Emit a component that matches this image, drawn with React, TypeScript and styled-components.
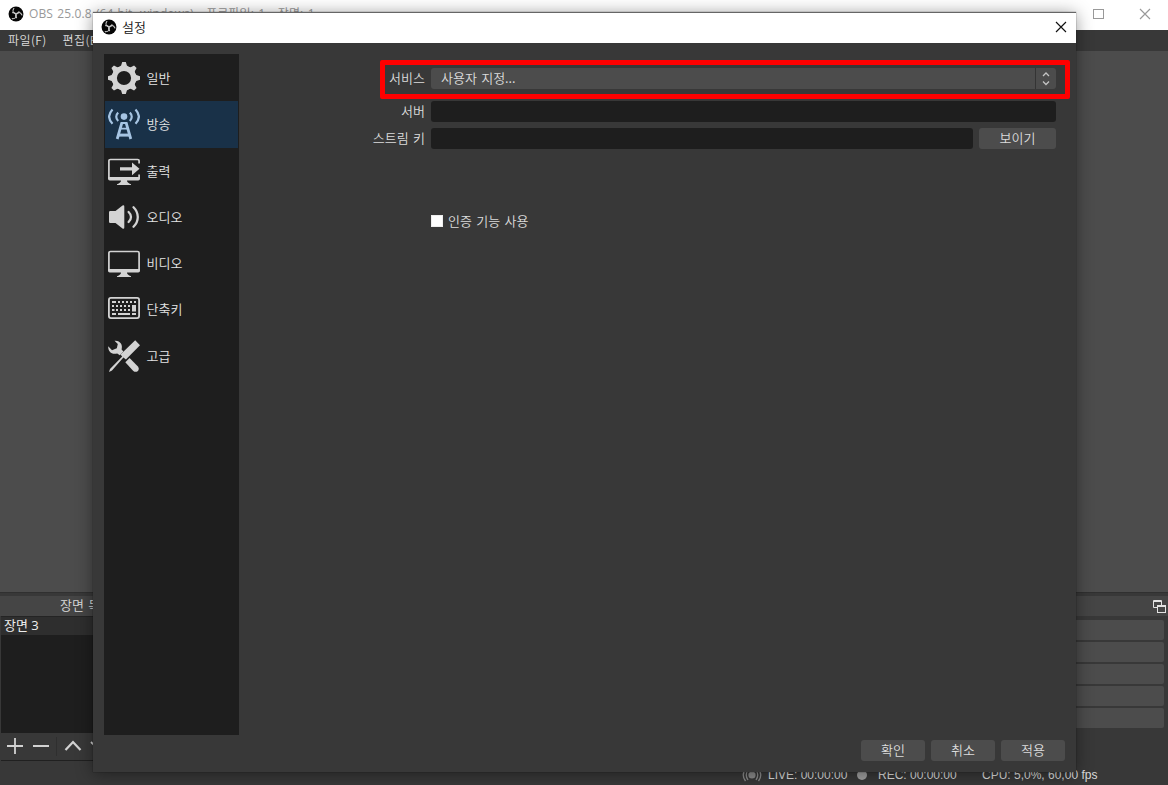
import React from "react";
import styled, { createGlobalStyle } from "styled-components";

const Global = createGlobalStyle`
  * { box-sizing: border-box; }
  html, body { margin: 0; overflow: hidden; background: #383838; }
  body {
    font-family: "Noto Sans CJK KR", "Open Sans", sans-serif;
    font-size: 13px;
    line-height: 16px;
    color: #dcdcdc;
    font-weight: 350;
    white-space: pre;
  }
`;

const Desktop = styled.div`
  position: relative;
  width: 1168px;
  height: 785px;
  overflow: hidden;
`;

/* ---------- main window ---------- */

const MainWindow = styled.div`
  display: flex;
  flex-direction: column;
  height: 100%;
  background: #383838;
`;

const MainTitle = styled.div`
  flex: none;
  display: flex;
  align-items: center;
  height: 30px;
  padding: 0 17px 2px 8px;
  background: #fff;
  color: #999;
  font-family: "Open Sans", "Noto Sans CJK KR", sans-serif;
  font-size: 12px;
  font-weight: 400;
`;

const TitleText = styled.span<{ $main?: boolean }>`
  flex: 1;
  margin-left: 5px;
  letter-spacing: ${(p) => (p.$main ? 0.1 : 0)}px;
  word-spacing: ${(p) => (p.$main ? 1.1 : 0)}px;
`;

const WindowButtons = styled.div`
  display: flex;
  gap: 35px;
`;

const MenuBar = styled.div`
  flex: none;
  display: flex;
  gap: 16px;
  height: 21px;
  padding: 2px 8px;
  font-size: 12px;
  letter-spacing: 0.4px;
`;

const Preview = styled.div`
  flex: none;
  height: 541px;
  background: #4c4c4c;
`;

const Docks = styled.div`
  flex: none;
  display: flex;
  justify-content: space-between;
  height: 169px;
  padding-top: 3px;
  border-top: 1px solid #303030;
`;

const Dock = styled.div<{ $width: number }>`
  display: flex;
  flex-direction: column;
  width: ${(p) => p.$width}px;
`;

const DockTitle = styled.div<{ $end?: boolean }>`
  flex: none;
  display: flex;
  align-items: center;
  justify-content: ${(p) => (p.$end ? "flex-end" : "flex-start")};
  height: 20px;
  padding: ${(p) => (p.$end ? "2px 2px 0 0" : "0 0 2px 60px")};
  background: #454545;
  word-spacing: 1.5px;
`;

const SceneList = styled.div`
  flex: 1;
  margin-left: 1px;
  border-top: 1px solid #242424;
  background: #1e1e1e;
`;

const SceneRow = styled.div`
  height: 18px;
  padding: 0 3px;
  background: #2e2e2e;
  color: #eee;
  font-family: "Open Sans", "Noto Sans CJK KR", sans-serif;
  font-size: 13px;
  font-weight: 400;
`;

const DockToolbar = styled.div`
  flex: none;
  height: 28px;
  margin-left: 1px;
  border-bottom: 1px solid #202020;
`;

const ControlStack = styled.div`
  display: flex;
  flex-direction: column;
  gap: 2px;
  padding: 4.4px 4px 0 0;
`;

const ControlButton = styled.div`
  height: 20px;
  border-radius: 2px;
  background: #4c4c4c;
`;

const StatusBar = styled.div`
  flex: 1;
  display: flex;
  align-items: center;
  padding: 3px 71px 0 0;
  justify-content: flex-end;
  font-family: "Liberation Sans", sans-serif;
  font-size: 12px;
`;

const StatusText = styled.span<{ $width: number; $gap: number }>`
  width: ${(p) => p.$width}px;
  margin-left: ${(p) => p.$gap}px;
`;

/* ---------- settings dialog ---------- */

const Dialog = styled.div`
  position: absolute;
  left: 93px;
  top: 12px;
  width: 983px;
  height: 760px;
  display: flex;
  flex-direction: column;
  border-top: 1px solid #666;
  background: #383838;
  box-shadow: 0 2px 16px rgba(0, 0, 0, 0.42), 0 0 1px rgba(0, 0, 0, 0.6);
`;

const DialogTitle = styled.div`
  flex: none;
  display: flex;
  align-items: center;
  height: 30px;
  padding: 0 9px 2px 8px;
  background: #fff;
  color: #111;
  font-size: 13px;
`;

const DialogBody = styled.div`
  flex: 1;
  display: flex;
  padding: 11px 11px 6px;
`;

const Sidebar = styled.nav`
  flex: none;
  width: 135px;
  height: 681px;
  padding: 1px;
  background: #1e1e1e;
`;

const SideItem = styled.div<{ $active?: boolean }>`
  display: flex;
  align-items: center;
  gap: 6.5px;
  height: 46.25px;
  padding-left: 3px;
  background: ${(p) => (p.$active ? "#193148" : "transparent")};
  color: #e4e4e4;
  svg { flex: none; color: ${(p) => (p.$active ? "#a6c4e2" : "#d3d3d3")}; }
`;

const Content = styled.div`
  flex: 1;
  display: flex;
  flex-direction: column;
  padding-left: 9px;
  word-spacing: 1.4px;
`;

const Form = styled.div`
  flex: 1;
`;

const Highlight = styled.div`
  display: flex;
  width: 690px;
  height: 39px;
  margin: 6px 0 0 132px;
  padding: 3px 9px 0 0;
  border: 5px solid #f00;
  border-radius: 2px;
`;

const FormRow = styled.div<{ $top: number }>`
  display: flex;
  gap: 6px;
  width: 808px;
  margin-top: ${(p) => p.$top}px;
`;

const Label = styled.span<{ $width: number }>`
  flex: none;
  width: ${(p) => p.$width}px;
  padding-top: 2px;
  text-align: right;
`;

const Select = styled.div`
  flex: 1;
  display: flex;
  height: 21px;
  margin-left: 6px;
  border-radius: 3px;
  background: #4c4c4c;
`;

const SelectValue = styled.span`
  flex: 1;
  padding: 2px 0 0 10px;
`;

const SelectArrows = styled.span`
  width: 21px;
  padding: 4px 0 0 6px;
  border-left: 1px solid #343434;
  line-height: 0;
`;

const Field = styled.div`
  flex: 1;
  height: 21px;
  border-radius: 3px;
  background: #1e1e1e;
`;

const Button = styled.div<{ $width: number }>`
  width: ${(p) => p.$width}px;
  height: 21px;
  padding-top: 2px;
  border-radius: 3px;
  background: #4c4c4c;
  text-align: center;
`;

const CheckRow = styled.div`
  display: flex;
  align-items: center;
  gap: 5px;
  margin: 64px 0 0 183px;
`;

const CheckBox = styled.span`
  width: 12px;
  height: 12px;
  background: #fff;
  border: 1px solid #eee;
`;

const Actions = styled.div`
  display: flex;
  justify-content: flex-end;
  gap: 6px;
  width: 817px;
  height: 26px;
`;

/* ---------- drawings ---------- */

const Logo = () => (
  <svg width="16" height="16" viewBox="0 0 30 30">
    <circle cx="15" cy="15" r="14" fill="#060606" />
    <g fill="none" stroke="#c8c8c8" strokeWidth="2" strokeLinecap="round">
      {[0, 120, 240].map((a) => (
        <path key={a} transform={`rotate(${a} 15 15)`} d="M11 4.5C7.5 9 9.5 14.5 15 14.8C18 14.8 20 13 20.5 10.5" />
      ))}
    </g>
  </svg>
);

const Cross = ({ color }: { color: string }) => (
  <svg width="12" height="12" viewBox="0 0 12 12" stroke={color} strokeWidth="1.15">
    <path d="M1 1L11 11M11 1L1 11" />
  </svg>
);

const Icon = ({ children }: { children: React.ReactNode }) => (
  <svg width="32" height="32" viewBox="0 0 32 32" fill="none">{children}</svg>
);

const Gear = () => (
  <Icon>
    <circle cx="16" cy="16" r="9.6" stroke="currentColor" strokeWidth="5" />
    {[0, 45, 90, 135, 180, 225, 270, 315].map((a) => (
      <path key={a} transform={`rotate(${a} 16 16)`} fill="currentColor" d="M14.2 0H17.8L18.9 3.6L21.5 5.4V7H10.5V5.4L13.1 3.6Z" />
    ))}
  </Icon>
);

const Tower = () => (
  <Icon>
    <circle cx="16" cy="8.6" r="3.3" fill="currentColor" />
    <g stroke="currentColor" strokeWidth="2.2">
      <path d="M10.2 4.6C7.6 7 7.6 10.6 10.2 13M21.8 4.6C24.4 7 24.4 10.6 21.8 13" />
      <path d="M4.5 1.4C.2 6 .2 11.2 4.5 15.8M27.5 1.4C31.8 6 31.8 11.2 27.5 15.8" />
    </g>
    <path stroke="currentColor" strokeWidth="2.8" d="M13.9 14.6L9.2 31M18.1 14.6L22.8 31" />
    <path stroke="currentColor" strokeWidth="1.8" d="M12.8 15H19.2M12.5 20.6H19.5" />
    <path stroke="currentColor" strokeWidth="3" d="M11 27.1H21" />
  </Icon>
);

const Monitor = ({ arrow }: { arrow?: boolean }) => (
  <Icon>
    <g transform="translate(0 .6)">
      {arrow ? (
        <path stroke="currentColor" strokeWidth="1.7" d="M31.1 8V5.5Q31.1 3.9 29.5 3.9H2.5Q.9 3.9 .9 5.5V22M31.1 19V22" />
      ) : (
        <rect x=".9" y="3.9" width="30.2" height="19.5" rx="1.6" stroke="currentColor" strokeWidth="1.7" />
      )}
      <path fill="currentColor" d="M0 21.3H32V23.2Q32 25 30.2 25H1.8Q0 25 0 23.2ZM13 25H19Q19 27.4 23 28.6V29.3H9V28.6Q13 27.4 13 25Z" />
      {arrow && <path fill="currentColor" d="M12 11.6H24V7L31.5 13.2L24 19.6V15H12Z" />}
    </g>
  </Icon>
);

const Speaker = () => (
  <Icon>
    <path fill="currentColor" d="M1 11.2Q1 10 2.2 10H7.5L14.5 4.5Q16.3 3.8 16.3 5.5V26.5Q16.3 28.2 14.5 27.5L7.5 22H2.2Q1 22 1 20.8Z" />
    <path stroke="currentColor" strokeWidth="2.3" strokeLinecap="round" d="M20.6 11C23.8 14 23.8 18 20.6 21M25.5 6.2C31.2 11.8 31.2 20.2 25.5 25.8" />
  </Icon>
);

const Keyboard = () => (
  <Icon>
    <g transform="translate(0 -1)">
      <rect x=".9" y="5.9" width="30.2" height="20.2" rx="2" stroke="currentColor" strokeWidth="1.8" />
      <g stroke="currentColor" strokeWidth="2">
        <path d="M4 10H8M10 10H12M14 10H16M18 10H20M22 10H24M26 10H28" />
        <path d="M4 14H6M8 14H10M12 14H14M16 14H18M20 14H22" />
        <path d="M4 18H6.5M8 18H10M12 18H14M16 18H18M20 18H22" />
        <path d="M4 22H8M10 22H22M24 22H28" />
      </g>
      <path fill="currentColor" d="M24 13H28V19.5H24Z" />
    </g>
  </Icon>
);

const Tools = () => (
  <Icon>
    <path fill="currentColor" d="M27.2 .3L32 5.2L17.9 19.6L15.4 17.4L4 30.6L1 32L2 29L14.2 16.4L12.5 14.6Z" />
    <path fill="currentColor" d="M6.5 .8C12.2 .2 15 5 13.6 9.4L15.4 11.6L11.8 15.2L9.2 13.4C4.2 15 0 12 .2 6.2L4 10.2L8.8 8.2L9.8 4Z" />
    <path fill="currentColor" d="M21.6 18L29.9 26.4C32.6 29.6 28.6 33.6 25.3 30.9L17.3 22.3Z" />
  </Icon>
);

const ToolbarGlyphs = () => (
  <svg width="92" height="27" viewBox="0 0 92 27" fill="none" stroke="#d2d2d2" strokeWidth="1.8">
    <path d="M6 13H22M14 5V21M32 13H48" />
    <path d="M64.5 17L72 9L79.5 17" strokeWidth="2.2" />
    <path d="M90 9L96 15" />
    <path d="M55.5 4V23" stroke="#2f2f2f" strokeWidth="1" />
  </svg>
);

const Undock = () => (
  <svg width="13" height="14" viewBox="0 0 13 14" fill="none" stroke="#e2e2e2">
    <path d="M4 7.5H.5V.5H8.5V5M0 1.5H9" />
    <rect x="4.5" y="5.5" width="8" height="7" />
    <path d="M4 6.5H13" />
  </svg>
);

const LiveGlyph = () => (
  <svg width="20" height="14" viewBox="0 0 20 14" fill="none" stroke="#8c8c8c" strokeWidth="1.3">
    <circle cx="10" cy="7" r="3.6" fill="#8c8c8c" stroke="none" />
    <path d="M6 2Q2.5 7 6 12M14 2Q17.5 7 14 12M3.5 1Q-1 7 3.5 13M16.5 1Q21 7 16.5 13" />
  </svg>
);

const RecDot = styled.span`
  width: 10px;
  height: 10px;
  margin-left: 10px;
  border-radius: 50%;
  background: #a0a0a0;
`;

const sections = [
  { name: "일반", icon: <Gear /> },
  { name: "방송", icon: <Tower />, active: true },
  { name: "출력", icon: <Monitor arrow /> },
  { name: "오디오", icon: <Speaker /> },
  { name: "비디오", icon: <Monitor /> },
  { name: "단축키", icon: <Keyboard /> },
  { name: "고급", icon: <Tools /> },
];

export default function App() {
  return (
    <Desktop>
      <Global />
      <MainWindow>
        <MainTitle>
          <Logo />
          <TitleText $main>OBS 25.0.8 (64-bit, windows) - 프로파일: 1 - 장면: 1</TitleText>
          <WindowButtons>
            <svg width="11" height="12" viewBox="0 0 11 12" fill="none" stroke="#999">
              <rect x=".5" y="1.5" width="10" height="9" />
            </svg>
            <Cross color="#999" />
          </WindowButtons>
        </MainTitle>
        <MenuBar>
          <span>파일(F)</span>
          <span>편집(E)</span>
        </MenuBar>
        <Preview />
        <Docks>
          <Dock $width={200}>
            <DockTitle>장면 목록</DockTitle>
            <SceneList>
              <SceneRow>장면 3</SceneRow>
            </SceneList>
            <DockToolbar>
              <ToolbarGlyphs />
            </DockToolbar>
          </Dock>
          <Dock $width={200}>
            <DockTitle $end>
              <Undock />
            </DockTitle>
            <ControlStack>
              {[0, 1, 2, 3, 4].map((i) => (
                <ControlButton key={i} />
              ))}
            </ControlStack>
          </Dock>
        </Docks>
        <StatusBar>
          <LiveGlyph />
          <StatusText $width={79} $gap={6}>LIVE: 00:00:00</StatusText>
          <RecDot />
          <StatusText $width={78} $gap={11}>REC: 00:00:00</StatusText>
          <StatusText $width={115} $gap={26}>CPU: 5,0%, 60,00 fps</StatusText>
        </StatusBar>
      </MainWindow>

      <Dialog>
        <DialogTitle>
          <Logo />
          <TitleText>설정</TitleText>
          <Cross color="#111" />
        </DialogTitle>
        <DialogBody>
          <Sidebar>
            {sections.map((s) => (
              <SideItem key={s.name} $active={s.active}>
                {s.icon}
                {s.name}
              </SideItem>
            ))}
          </Sidebar>
          <Content>
            <Form>
              <Highlight>
                <Label $width={40}>서비스</Label>
                <Select>
                  <SelectValue>사용자 지정...</SelectValue>
                  <SelectArrows>
                    <svg width="8" height="14" viewBox="0 0 8 14" fill="none" stroke="#c4c4c4" strokeWidth="1.3">
                      <path d="M1 4L4 1L7 4M1 9.5L4 12.5L7 9.5" />
                    </svg>
                  </SelectArrows>
                </Select>
              </Highlight>
              <FormRow $top={2}>
                <Label $width={177}>서버</Label>
                <Field />
              </FormRow>
              <FormRow $top={6}>
                <Label $width={177}>스트림 키</Label>
                <Field />
                <Button $width={77}>보이기</Button>
              </FormRow>
              <CheckRow>
                <CheckBox />
                <span>인증 기능 사용</span>
              </CheckRow>
            </Form>
            <Actions>
              <Button $width={64}>확인</Button>
              <Button $width={64}>취소</Button>
              <Button $width={64}>적용</Button>
            </Actions>
          </Content>
        </DialogBody>
      </Dialog>
    </Desktop>
  );
}
